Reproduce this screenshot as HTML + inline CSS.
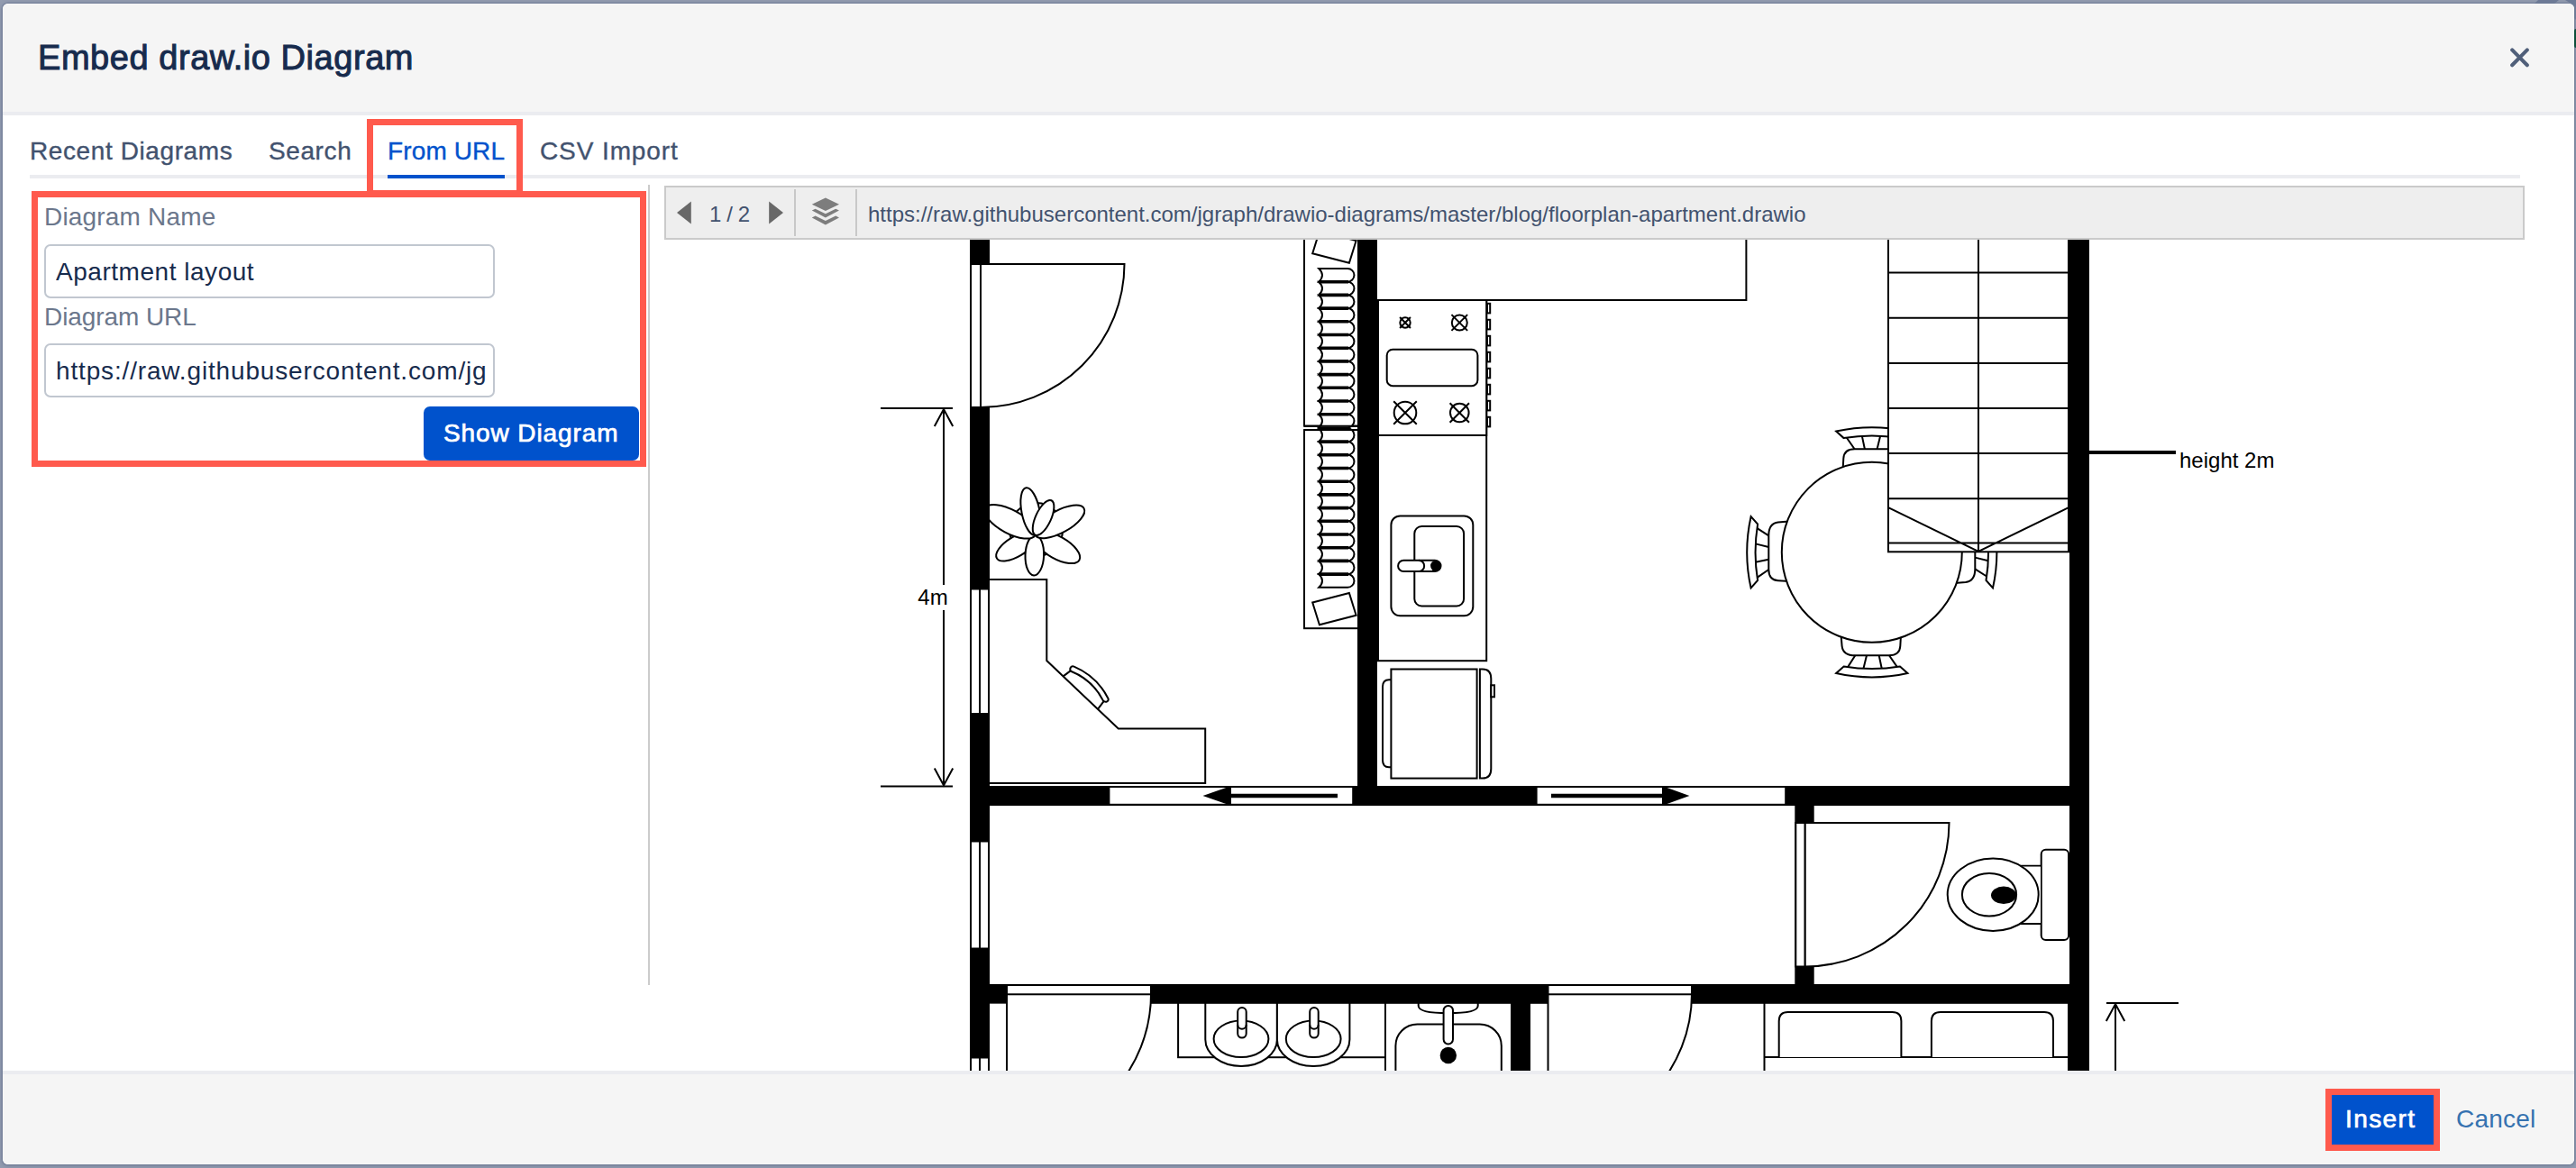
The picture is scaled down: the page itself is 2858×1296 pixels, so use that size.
<!DOCTYPE html>
<html lang="en">
<head>
<meta charset="utf-8">
<title>Embed draw.io Diagram</title>
<style>
html,body{margin:0;padding:0;}
body{width:2858px;height:1296px;overflow:hidden;position:relative;background:#939cb0;
  font-family:"Liberation Sans",Arial,Helvetica,sans-serif;}
.abs{position:absolute;}
.t{position:absolute;white-space:nowrap;line-height:1;opacity:.999;}
#shadow{left:3px;top:4px;width:2853px;height:1288px;border-radius:6px;box-shadow:0 0 0 1.5px rgba(110,122,148,.5),0 1px 5px 1px rgba(90,104,132,.45);}
#dlg{left:3px;top:4px;width:2853px;height:1288px;border-radius:6px;background:#fff;overflow:hidden;}
.ui{color:#172b4d;}
.tab{font-size:28px;color:#42526e;-webkit-text-stroke:0.35px #42526e;}
.lbl{font-size:28px;color:#6b778c;}
.inp{position:absolute;box-sizing:border-box;width:500px;height:60px;border:2px solid #c1c7d0;border-radius:7px;background:#fff;overflow:hidden;}
.inp span{opacity:.999;position:absolute;left:11px;white-space:nowrap;line-height:1;font-size:28px;color:#172b4d;}
.red{position:absolute;box-sizing:border-box;border:7px solid #ff5a4d;}
.btn{position:absolute;background:#0052cc;color:#fff;}
</style>
</head>
<body>
<div id="shadow" class="abs"></div>
<div class="abs" style="left:2856px;top:32px;width:4px;height:21px;border-radius:2px;background:#0e4f3a;"></div>
<svg class="abs" style="left:2800px;top:0;" width="58" height="30" viewBox="2800 0 58 30"><path d="M2816,0 H2839 L2834,4 H2812 Z M2846,0 H2858 V22 L2856,20 V6 Z" fill="#6d7a96"/></svg>
<div id="dlg" class="abs"></div>

<!-- everything below is positioned in page coordinates -->
<div class="abs" style="left:3px;top:4px;width:2853px;height:120px;background:#f5f5f5;border-radius:6px 6px 0 0;"></div>
<div class="abs" style="left:3px;top:124px;width:2853px;height:4px;background:#ebecf0;"></div>
<div class="abs" style="left:3px;top:1188px;width:2853px;height:4px;background:#ebecf0;"></div>
<div class="abs" style="left:3px;top:1192px;width:2853px;height:100px;background:#f5f5f5;border-radius:0 0 6px 6px;"></div>

<!-- title -->
<span id="title" class="t ui" style="left:42px;top:45px;font-size:38px;-webkit-text-stroke:1px #172b4d;letter-spacing:0.55px;">Embed draw.io Diagram</span>
<!-- close icon -->
<svg class="abs" style="left:2775px;top:44px;" width="40" height="40" viewBox="0 0 40 40"><path d="M12.2 11.4 L28.8 28.3 M28.8 11.4 L12.2 28.3" stroke="#505f79" stroke-width="4.1" stroke-linecap="round" fill="none"/></svg>

<!-- tabs -->
<div class="abs" style="left:33px;top:194px;width:2763px;height:4px;background:#ebecf0;"></div>
<span id="tab1" class="t tab" style="left:33px;top:154px;letter-spacing:0.6px;">Recent Diagrams</span>
<span id="tab2" class="t tab" style="left:298px;top:154px;letter-spacing:0.6px;">Search</span>
<span id="tab3" class="t tab" style="left:430px;top:154px;color:#0052cc;-webkit-text-stroke-color:#0052cc;letter-spacing:0.13px;">From URL</span>
<span id="tab4" class="t tab" style="left:599px;top:154px;letter-spacing:0.9px;">CSV Import</span>
<div class="abs" style="left:430px;top:194px;width:130px;height:4px;background:#0052cc;"></div>
<div class="red" style="left:407px;top:132px;width:173px;height:86px;"></div>

<!-- form -->
<div class="red" style="left:35px;top:212px;width:682px;height:306px;"></div>
<span id="lbl1" class="t lbl" style="left:49px;top:227px;letter-spacing:0.18px;">Diagram Name</span>
<div class="inp" style="left:49px;top:271px;"><span id="in1" style="top:14.5px;letter-spacing:0.53px;">Apartment layout</span></div>
<span id="lbl2" class="t lbl" style="left:49px;top:337.5px;letter-spacing:-0.08px;">Diagram URL</span>
<div class="inp" style="left:49px;top:381px;"><span id="in2" style="top:14.5px;letter-spacing:0.84px;">https://raw.githubusercontent.com/jg</span></div>
<div class="btn" style="left:470px;top:451px;width:239px;height:60px;border-radius:7px;"></div>
<span id="showd" class="t" style="left:492px;top:467px;font-size:28px;color:#fff;-webkit-text-stroke:0.7px #fff;letter-spacing:0.9px;">Show Diagram</span>

<!-- vertical divider -->
<div class="abs" style="left:719px;top:205px;width:2px;height:888px;background:#cccccc;"></div>

<!-- viewer toolbar -->
<div class="abs" style="left:737px;top:206px;width:2064px;height:60px;box-sizing:border-box;border:2px solid #cacaca;background:#eeeeee;"></div>
<svg class="abs" style="left:737px;top:206px;" width="240" height="60" viewBox="737 206 240 60">
  <path d="M751 236 L766.8 223.6 L766.8 248.4 Z" fill="#686868"/>
  <path d="M869 236 L853.2 223.6 L853.2 248.4 Z" fill="#686868"/>
  <rect x="881" y="210" width="2" height="52" fill="#c8c8c8"/>
  <rect x="949" y="210" width="2" height="52" fill="#c8c8c8"/>
  <g fill="#7d7d7d">
    <path d="M915.9 219.6 L931 226.8 L915.9 234 L900.8 226.8 Z"/>
    <path d="M900.8 233.6 L904.6 231.8 L915.9 237.2 L927.2 231.8 L931 233.6 L915.9 241.6 Z"/>
    <path d="M900.8 241.4 L904.6 239.6 L915.9 245 L927.2 239.6 L931 241.4 L915.9 249.6 Z"/>
  </g>
</svg>
<span id="pg" class="t" style="left:787px;top:226px;font-size:24px;color:#42526e;letter-spacing:-0.4px;">1 / 2</span>
<span id="url" class="t" style="left:963px;top:226px;font-size:24px;color:#42526e;">https://raw.githubusercontent.com/jgraph/drawio-diagrams/master/blog/floorplan-apartment.drawio</span>

<!-- DIAGRAM -->
<!--SVGSTART-->
<svg class="abs" style="left:737px;top:266px;" width="2064" height="922" viewBox="737 266 2064 922" fill="#fff" stroke="#000" stroke-width="2" font-family="'Liberation Sans',Arial,Helvetica,sans-serif">
<defs>
  <path id="hg" d="M1.8,0 L33.6,0 A7.35,7.35 0 0 1 33.6,14.7 L1.8,14.7 Q9.2,7.35 1.8,0 Z"/>
  <g id="chair">
    <path d="M-34.2,92 L-33.2,104 Q-32,114.5 -18.5,114.5 L19,114.5 Q31,114.5 31.5,104 L32.2,92 Z"/>
    <path d="M-18.5,114.5 L-26.7,127.3 M-5.8,114.5 L-9.4,129.2 M7.9,114.5 L11,129.2 M19.2,114.5 L28.1,127.3" fill="none"/>
    <path d="M-31.2,126.7 Q0,131.8 31.2,126.7 L39.6,134.2 Q0,143 -39.6,134.2 Z"/>
  </g>
  <g id="burner"><circle r="10"/><path d="M-10.4,-10.4 L10.4,10.4 M10.4,-10.4 L-10.4,10.4" fill="none"/></g>
</defs>

<!-- dimension 4m -->
<g fill="none">
  <path d="M977,453 H1057 M977,872.5 H1057 M1047,453 V649 M1047,677 V872"/>
  <path d="M1036.8,473 L1047,454 L1057.2,473 M1036.8,852.5 L1047,871.5 L1057.2,852.5"/>
  <path d="M2337,1113 H2417 M2347,1113 V1190 M2336.8,1133 L2347,1114 L2357.2,1133"/>
  <path d="M2317,502 H2414" stroke-width="4"/>
</g>
<text id="dim4m" opacity=".999" x="1035" y="671" font-size="24" text-anchor="middle" fill="#000" stroke="none">4m</text>
<text id="h2m" opacity=".999" x="2418" y="518.6" font-size="24" fill="#000" stroke="none">height 2m</text>

<!-- plant -->
<g transform="translate(1148.6,593.7)">
  <circle cx="1" cy="-6.1" r="29.5"/>
  <ellipse cx="24.9" cy="0" rx="24.9" ry="11.0" transform="rotate(148.9)"/>
  <ellipse cx="28.1" cy="0" rx="28.1" ry="12.3" transform="rotate(29.6)"/>
  <ellipse cx="22.4" cy="0" rx="22.4" ry="10.3" transform="rotate(92.0)"/>
  <ellipse cx="31.5" cy="0" rx="31.5" ry="13.0" transform="rotate(-151.8)"/>
  <ellipse cx="30.8" cy="0" rx="30.8" ry="12.3" transform="rotate(-28.7)"/>
  <ellipse cx="26.7" cy="0" rx="26.7" ry="10.0" transform="rotate(-101.1)"/>
  <ellipse cx="21.2" cy="0" rx="21.2" ry="8.5" transform="rotate(-65.0)"/>
</g>

<!-- desk -->
<path d="M1097,643 H1161.3 V733.1 L1240.8,808.6 H1337.2 V869 H1097 Z"/>
<path d="M1179.6,750.4 L1187.6,744.4 M1218.2,786.6 L1224.6,778.2" fill="none"/>
<path d="M1188.1,744.7 C1186.1,742 1188.3,738.3 1191.6,739.6 Q1216.85,750.27 1229.3,774.7 C1230.8,778 1226.8,780.2 1223.9,777.4 Q1212.2,754.3 1188.1,744.7 Z"/>

<!-- wardrobes -->
<rect x="1447" y="253" width="60" height="219.7"/>
<rect x="1447" y="477.1" width="60" height="220.1"/>
<polygon points="1456.2,281.2 1496.9,291.7 1504.6,267 1463.9,256.5"/>
<polygon points="1456.2,668.5 1496.9,658 1504.6,682.7 1463.9,693.2"/>
<g id="hangers1">
  <use href="#hg" x="1461.5" y="298"/><use href="#hg" x="1461.5" y="312.7"/><use href="#hg" x="1461.5" y="327.4"/><use href="#hg" x="1461.5" y="342.1"/>
  <use href="#hg" x="1461.5" y="356.8"/><use href="#hg" x="1461.5" y="371.5"/><use href="#hg" x="1461.5" y="386.2"/><use href="#hg" x="1461.5" y="400.9"/>
  <use href="#hg" x="1461.5" y="415.6"/><use href="#hg" x="1461.5" y="430.3"/><use href="#hg" x="1461.5" y="445"/><use href="#hg" x="1461.5" y="459.7"/>
<path d="M1463,312.7 H1496 M1463,327.4 H1496 M1463,342.1 H1496 M1463,356.8 H1496 M1463,371.5 H1496 M1463,386.2 H1496 M1463,400.9 H1496 M1463,415.6 H1496 M1463,430.3 H1496 M1463,445.0 H1496 M1463,459.7 H1496" fill="none" stroke-width="3.6"/>
</g>
<g id="hangers2">
  <use href="#hg" x="1461.5" y="475.4"/><use href="#hg" x="1461.5" y="490.1"/><use href="#hg" x="1461.5" y="504.8"/><use href="#hg" x="1461.5" y="519.5"/>
  <use href="#hg" x="1461.5" y="534.2"/><use href="#hg" x="1461.5" y="548.9"/><use href="#hg" x="1461.5" y="563.6"/><use href="#hg" x="1461.5" y="578.3"/>
  <use href="#hg" x="1461.5" y="593"/><use href="#hg" x="1461.5" y="607.7"/><use href="#hg" x="1461.5" y="622.4"/><use href="#hg" x="1461.5" y="637.1"/>
<path d="M1463,490.1 H1496 M1463,504.8 H1496 M1463,519.5 H1496 M1463,534.2 H1496 M1463,548.9 H1496 M1463,563.6 H1496 M1463,578.3 H1496 M1463,593.0 H1496 M1463,607.7 H1496 M1463,622.4 H1496 M1463,637.1 H1496" fill="none" stroke-width="3.6"/>
</g>
<path d="M1447,472.7 H1506 M1447,477.1 H1506" fill="none"/>

<!-- kitchen counters -->
<rect x="1520" y="240" width="417.4" height="93"/>
<rect x="1529" y="333" width="120.2" height="400.2"/>
<rect x="1529" y="333" width="120.2" height="150"/>
<use href="#burner" transform="translate(1559,358) scale(0.57)" stroke-width="3.5"/>
<use href="#burner" transform="translate(1619.3,358) scale(0.85)" stroke-width="2.35"/>
<use href="#burner" transform="translate(1559,458) scale(1.23)" stroke-width="1.63"/>
<use href="#burner" transform="translate(1619.3,458) scale(1.03)" stroke-width="1.94"/>
<rect x="1538.7" y="387.7" width="100.7" height="40.5" rx="6.5"/>
<g id="knobs">
  <rect x="1650" y="336.8" width="3.2" height="10.6"/><rect x="1650" y="354.8" width="3.2" height="10.6"/><rect x="1650" y="372.8" width="3.2" height="10.6"/><rect x="1650" y="390.8" width="3.2" height="10.6"/>
  <rect x="1650" y="408.8" width="3.2" height="10.6"/><rect x="1650" y="426.8" width="3.2" height="10.6"/><rect x="1650" y="444.8" width="3.2" height="10.6"/><rect x="1650" y="462.8" width="3.2" height="10.6"/>
</g>
<!-- kitchen sink -->
<rect x="1543.4" y="572.4" width="90.9" height="110.9" rx="10"/>
<rect x="1569.3" y="584" width="54.8" height="88.5" rx="8"/>
<rect x="1551.1" y="621.7" width="47" height="12.4" rx="6.2"/>
<path d="M1574,621.7 A6.2,6.2 0 0 1 1574,634.1" fill="none"/>
<circle cx="1593.3" cy="627.9" r="6.2" fill="#000" stroke="none"/>
<!-- fridge -->
<path d="M1543.4,754.2 H1541 Q1534,754.2 1534,762 V843.5 Q1534,851.2 1541,851.2 H1543.4"/>
<rect x="1543.4" y="742.5" width="95.2" height="121.1"/>
<path d="M1641.9,742.5 H1645 Q1654.3,742.5 1654.3,753 V853 Q1654.3,863.6 1645,863.6 H1641.9 Z"/>
<rect x="1654.3" y="760.3" width="3.7" height="13"/>

<!-- table and chairs -->
<g transform="translate(2076.8,612.8)">
  <use href="#chair"/><use href="#chair" transform="rotate(90)"/><use href="#chair" transform="rotate(180)"/><use href="#chair" transform="rotate(270)"/>
  <circle r="100"/>
</g>
<!-- stairs -->
<rect x="2095" y="240" width="200" height="372.3"/>
<path d="M2195,240 V612.3 M2095,302.6 H2295 M2095,352.8 H2295 M2095,402.9 H2295 M2095,453 H2295 M2095,503.1 H2295 M2095,553.2 H2295 M2095,602.5 H2295 M2095,563.2 L2195,612 L2295,563.2" fill="none"/>

<!-- toilet -->
<rect x="2264.7" y="942.7" width="30.4" height="100.3" rx="5"/>
<path d="M2240,960.7 H2264.7 M2240,1025 H2264.7" fill="none"/>
<rect x="2236" y="961.7" width="28" height="62.3" stroke="none"/>
<ellipse cx="2211.2" cy="992.7" rx="50.5" ry="40.2"/>
<ellipse cx="2207" cy="992.7" rx="30.1" ry="23.8"/>
<ellipse cx="2223" cy="993.3" rx="14" ry="9.7" fill="#000" stroke="none"/>

<!-- bathroom sinks -->
<rect x="1307.1" y="1103" width="229.9" height="70.2"/>
<path d="M1337.3,1103 V1153.6 A39.8,29.4 0 0 0 1416.9,1153.6 V1103 Z"/>
<path d="M1416.9,1103 V1153.6 A40.25,29.4 0 0 0 1497.4,1153.6 V1103 Z"/>
<ellipse cx="1377" cy="1152.8" rx="30.4" ry="20.2"/>
<ellipse cx="1457.2" cy="1152.8" rx="30.4" ry="20.2"/>
<rect x="1373.2" y="1118" width="9.5" height="33.6" rx="4.75"/>
<rect x="1453.2" y="1118" width="9.5" height="33.6" rx="4.75"/>
<path d="M1373.2,1137 A4.75,4.75 0 0 0 1382.7,1137 M1453.2,1137 A4.75,4.75 0 0 0 1462.7,1137" fill="none"/>
<!-- bath -->
<path d="M1537,1103 V1190" fill="none"/>
<path d="M1573.7,1103 V1116 Q1573.7,1124.2 1606.7,1124.2 Q1639.7,1124.2 1639.7,1116 V1103" />
<rect x="1548.4" y="1136.5" width="117.4" height="120" rx="24"/>
<rect x="1601.6" y="1116" width="10.4" height="42.5" rx="5.2"/>
<circle cx="1606.8" cy="1171" r="9.2" fill="#000" stroke="none"/>
<!-- bed -->
<rect x="1957.5" y="1103" width="337.5" height="120"/>
<path d="M1957.5,1173 H2295" fill="none"/>
<path d="M1973.7,1173 V1133 Q1973.7,1123 1983.7,1123 H2099.4 Q2109.4,1123 2109.4,1133 V1173"/>
<path d="M2142.9,1173 V1133 Q2142.9,1123 2152.9,1123 H2268 Q2278,1123 2278,1133 V1173"/>

<!-- walls -->
<g fill="#000" stroke="none">
  <rect x="1076" y="240" width="22" height="960"/>
  <rect x="1506" y="240" width="22" height="640"/>
  <rect x="2296" y="240" width="22" height="960"/>
  <rect x="1076" y="872" width="1242" height="22"/>
  <rect x="1991.3" y="890" width="21.4" height="210"/>
  <rect x="1076" y="1092" width="1242" height="21.8"/>
  <rect x="1676" y="1100" width="22" height="100"/>
</g>

<!-- doors -->
<path d="M1088,293 H1247.5 A159.5,159.5 0 0 1 1088,452 Z"/>
<rect x="1077" y="293" width="11" height="159"/>
<path d="M2002.5,913 H2162.5 A160,160 0 0 1 2002.5,1072.5 Z"/>
<rect x="1992.3" y="913" width="10.2" height="159.5"/>
<path d="M1117,1103 H1277 A160,160 0 0 1 1117,1263 Z"/>
<rect x="1117" y="1093" width="160" height="10.3"/>
<path d="M1717.5,1103 H1877 A159.5,159.5 0 0 1 1717.5,1262.5 Z"/>
<rect x="1717.5" y="1093" width="159.5" height="10.3"/>
<rect x="1098" y="1113.8" width="18" height="90" stroke="none"/>

<!-- windows in left wall -->
<g>
  <rect x="1077" y="653.5" width="20" height="138.5"/><path d="M1087,653.5 V792" fill="none"/>
  <rect x="1077" y="933.5" width="20" height="119"/><path d="M1087,933.5 V1052.5" fill="none"/>
  <rect x="1077" y="1173.5" width="20" height="40"/><path d="M1087,1173.5 V1200" fill="none"/>
</g>

<!-- sliding doors -->
<rect x="1231.4" y="874" width="268.8" height="17.8" stroke="none"/>
<path d="M1334.5,883 L1366,872 V894 Z" fill="#000" stroke="none"/>
<path d="M1366,883 H1484" stroke-width="4.4" fill="none"/>
<rect x="1705.6" y="874" width="274.6" height="17.8" stroke="none"/>
<path d="M1874.4,883 L1844,872 V894 Z" fill="#000" stroke="none"/>
<path d="M1721,883 H1844" stroke-width="4.4" fill="none"/>
</svg>
<!--SVGEND-->

<!-- footer buttons -->
<div class="red" style="left:2579.5px;top:1207.5px;width:127px;height:69px;background:#0052cc;"></div>
<span id="ins" class="t" style="left:2602px;top:1228px;font-size:28px;color:#fff;-webkit-text-stroke:0.7px #fff;letter-spacing:1.4px;">Insert</span>
<span id="can" class="t" style="left:2725px;top:1228px;font-size:28px;color:#3572b0;letter-spacing:0.2px;">Cancel</span>
</body>
</html>
